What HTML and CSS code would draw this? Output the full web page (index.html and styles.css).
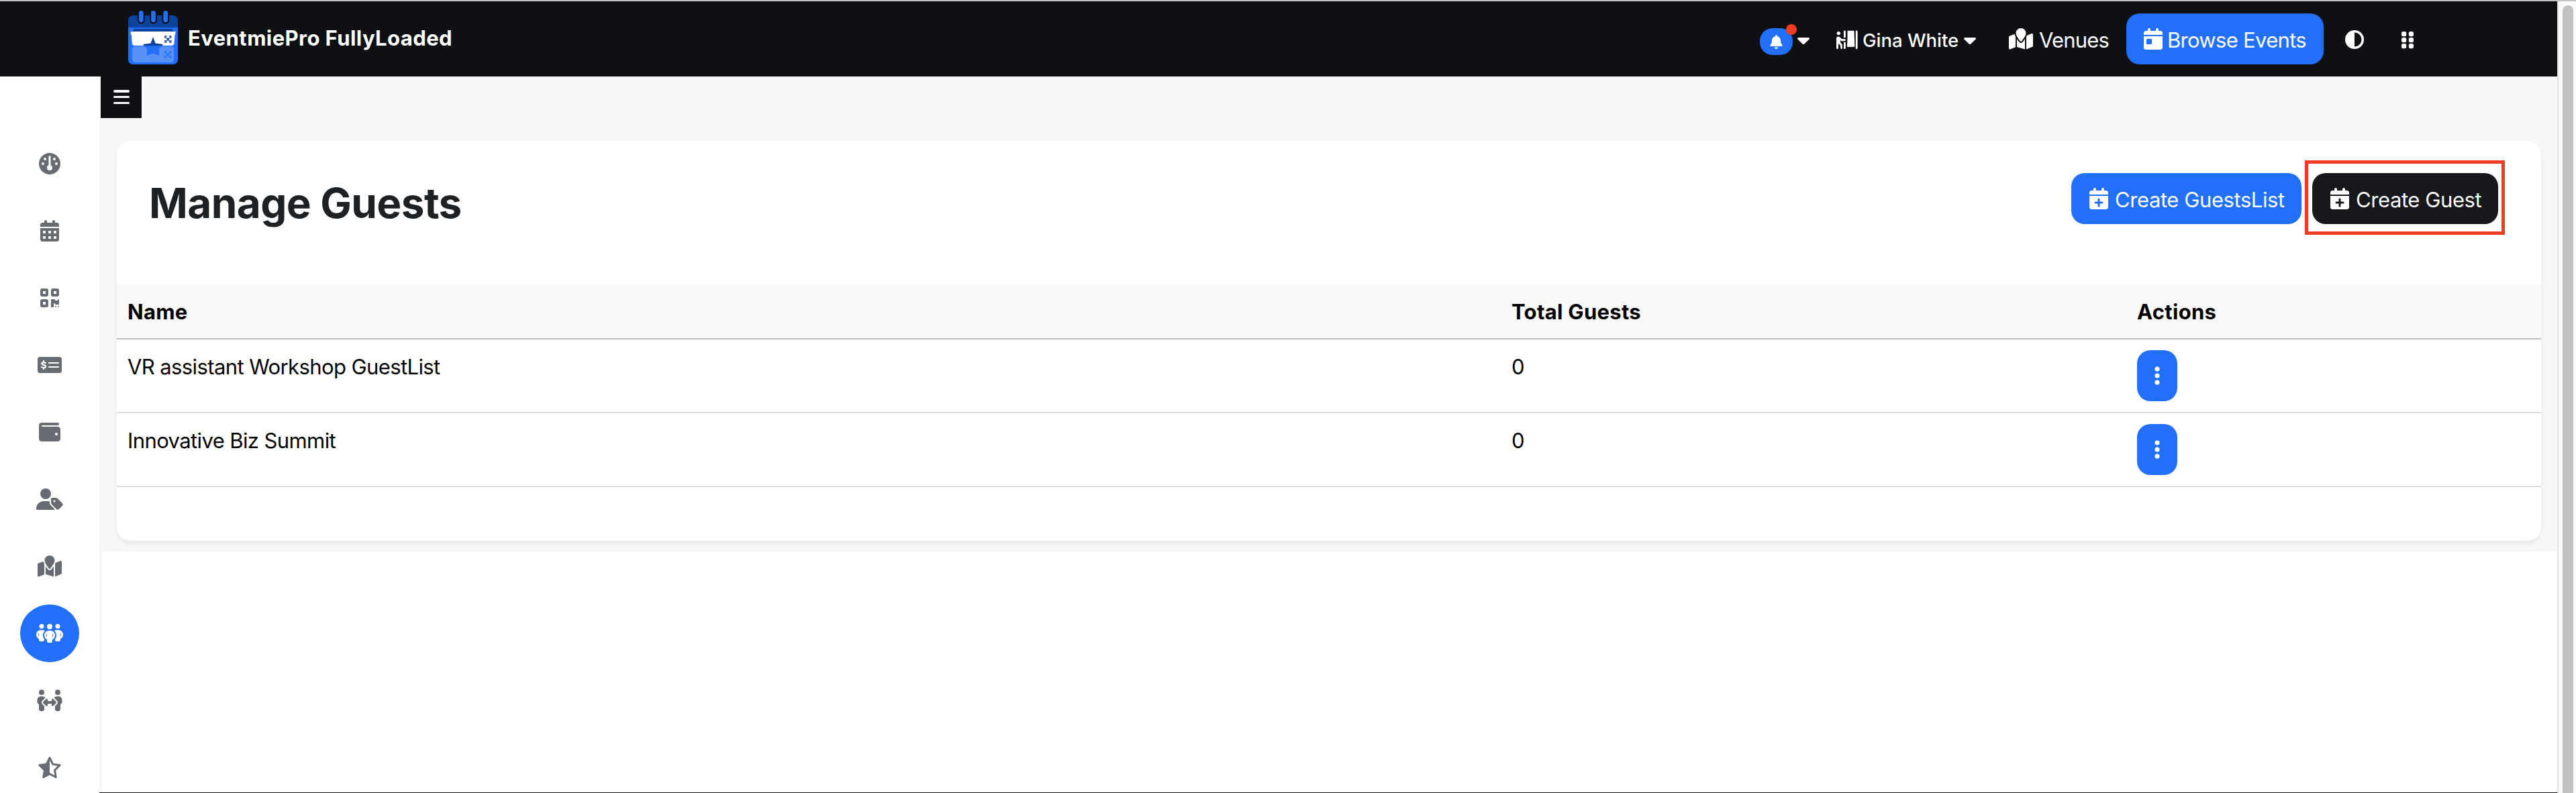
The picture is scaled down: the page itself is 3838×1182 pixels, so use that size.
FILE: index.html
```html
<!DOCTYPE html>
<html lang="en">
<head>
<meta charset="utf-8">
<title>Manage Guests</title>
<link rel="stylesheet" href="styles.css">
</head>
<body>
<svg class="sprite" aria-hidden="true">
  <symbol id="i-calendar-plus" viewBox="0 0 448 512"><path fill-rule="evenodd" d="M96 32a32 32 0 0 1 64 0V64H288V32a32 32 0 0 1 64 0V64h48c26.500 0 48 21.500 48 48v48H0V112C0 85.500 21.500 64 48 64H96zM0 192H448V464c0 26.500-21.500 48-48 48H48c-26.500 0-48-21.500-48-48zM200 272v56H144c-32 0-32 48 0 48h56v56c0 32 48 32 48 0V376h56c32 0 32-48 0-48H248V272c0-32-48-32-48 0z"/></symbol>
  <symbol id="i-map" viewBox="0 0 576 512"><path d="M408 120c0 54.600-73.100 151.900-105.200 192c-7.700 9.600-22 9.600-29.600 0C241.100 271.900 168 174.600 168 120C168 53.700 221.700 0 288 0s120 53.700 120 120zm8 80.400c3.500-6.900 6.700-13.800 9.600-20.600c.5-1.200 1-2.500 1.500-3.700l116-46.400C558.900 123.400 576 135 576 152l0 270.800c0 9.800-6 18.600-15.100 22.300L416 503l0-302.600zM137.600 138.300c2.400 14.100 7.200 28.300 12.800 41.500c2.900 6.800 6.100 13.700 9.600 20.600l0 251.400L32.900 502.700C17.100 509 0 497.400 0 480.400L0 209.600c0-9.800 6-18.600 15.100-22.300l122.600-49zM327.800 332c13.900-17.400 35.700-45.700 56.200-77l0 249.300L192 449.400 192 255c20.500 31.300 42.300 59.600 56.200 77c20.500 25.600 59.100 25.600 79.600 0z"/></symbol>
  <symbol id="i-caret" viewBox="0 0 18 10"><path d="M1.600 0H16.400C17.800 0 18.500 1.500 17.500 2.500L10.300 9.400c-.8.8-1.800.8-2.600 0L.5 2.500C-.5 1.500.2 0 1.600 0z"/></symbol>
  <symbol id="i-dots" viewBox="0 0 8 28"><circle cx="4" cy="4" r="3.600"/><circle cx="4" cy="14" r="3.600"/><circle cx="4" cy="24" r="3.600"/></symbol>
</svg>

<div class="top-line"></div>
<div class="window">
  <div class="app">
    <header class="navbar">
      <a class="brand">
        <svg class="logo" viewBox="0 0 74 80">
          <path fill="#0c439e" d="M7 7H67a7 7 0 0 1 7 7V26H0V14A7 7 0 0 1 7 7z"/>
          <path fill="#226ffa" d="M0 25H74V73a7 7 0 0 1-7 7H7a7 7 0 0 1-7-7z"/>
          <g stroke="#0f1014" stroke-width="11" stroke-linecap="round"><path d="M19.300 5V14M37.500 5V14M55.700 5V14"/></g>
          <g stroke="#226ffa" stroke-width="6.800" stroke-linecap="round"><path d="M19.300 3.400V13.800M37.500 3.400V13.800M55.700 3.400V13.800"/></g>
          <path fill="#0c439e" d="M9 27H65l3.500 5H6z"/>
          <path fill="#fff" d="M4 31H70.500Q71 33 69.500 36L68.500 49Q68 52 64 52H10Q6 52 5.800 49L5 37Q3 34 4 31z"/>
          <path fill="#5891f6" d="M11 53H63q5 0 5 5V72q0 5-5 5H11q-5 0-5-5V58q0-5 5-5z"/>
          <path fill="#0c439e" d="M37 39l3.500 9.500L52 50l-2 2.500H24L22 50l11.500-1.500z"/>
          <path fill="#226ffa" d="M24 52.500H50L46 57V67L37 63.500 28 67V57z"/>
          <path fill="none" stroke="#0c439e" stroke-width="1.600" d="M55 41V38H57.500M61 38H63.500V41M55 44V47H57.500M61 47H63.500V44M56.500 40l5.500 5.500M62 40l-5.500 5.500"/>
          <path fill="none" stroke="#226ffa" stroke-width="1.600" d="M55 64V61H57.500M61 61H63.500V64M55 67V70H57.500M61 70H63.500V67M56.500 63l5.500 5M62 63l-5.500 5"/>
        </svg>
        <span class="brand-name t">EventmiePro FullyLoaded</span>
      </a>
      <nav class="nav">
        <a class="bell">
          <svg viewBox="0 0 448 512"><path d="M224 0c-17.700 0-32 14.300-32 32l0 19.200C119 66 64 130.600 64 208l0 18.800c0 47-17.300 92.400-48.500 127.600l-7.400 8.300c-8.400 9.400-10.400 22.900-5.300 34.400S19.400 416 32 416l384 0c12.600 0 24-7.400 29.200-18.900s3.100-25-5.300-34.400l-7.400-8.300C401.300 319.200 384 273.900 384 226.800l0-18.800c0-77.400-55-142-128-156.800L256 32c0-17.700-14.300-32-32-32zm45.300 493.300c12-12 18.700-28.300 18.700-45.300l-128 0c0 17 6.700 33.300 18.700 45.300s28.300 18.700 45.300 18.700s33.300-6.700 45.300-18.700z"/></svg>
          <i class="unread"></i>
        </a>
        <svg class="caret caret-bell"><use href="#i-caret"/></svg>
        <svg class="booth" viewBox="0 0 32 28"><circle cx="3.300" cy="4.600" r="2.700"/><path d="M0 12.500Q0 9.500 2.800 9.500 5 9.500 6 11L8 13h4q2 0 2 1.600T12 16.200H7.500L6 15v3l2 2.500q.9 1 .9 2.500v3.500Q8.900 28 7.600 28T6.200 26.500V23L3 20v6.500Q3 28 1.500 28T0 26.500zM11 2Q11 .6 12.400.6T13.800 2V11H11zM11 18h2.800v8.500q0 1.500-1.400 1.500T11 26.500zM16.500.8H26.500L27.300 24Q26 25.500 25 24.500 24 26 22.500 24.500 21 26 19.500 24.500 17.500 26 15.700 24 16.800 18 16.500.8zM28.800 2q0-1.400 1.300-1.400T31.600 2V26.500q0 1.500-1.500 1.500t-1.300-1.500z"/></svg>
        <span class="user t">Gina White</span>
        <svg class="caret caret-user"><use href="#i-caret"/></svg>
        <svg class="map"><use href="#i-map"/></svg>
        <span class="venues t">Venues</span>
        <a class="btn btn-blue browse">
          <svg class="btn-icon" viewBox="0 0 448 512"><path fill-rule="evenodd" d="M96 32a32 32 0 0 1 64 0V64H288V32a32 32 0 0 1 64 0V64h48c26.500 0 48 21.500 48 48v48H0V112C0 85.500 21.500 64 48 64H96zM0 192H448V464c0 26.500-21.500 48-48 48H48c-26.500 0-48-21.500-48-48zM80 256q-16 0-16 16v96q0 16 16 16h96q16 0 16-16v-96q0-16-16-16z"/></svg>
          <span class="t">Browse Events</span>
        </a>
        <svg class="theme" viewBox="0 0 512 512"><path fill-rule="evenodd" d="M448 256c0-106-86-192-192-192V448c106 0 192-86 192-192zM0 256a256 256 0 1 1 512 0A256 256 0 1 1 0 256z"/></svg>
        <svg class="grip" viewBox="0 0 18 26"><rect width="7.200" height="7.200" rx="2.200"/><rect x="10.800" width="7.200" height="7.200" rx="2.200"/><rect y="9" width="7.200" height="7.200" rx="2.200"/><rect x="10.800" y="9" width="7.200" height="7.200" rx="2.200"/><rect y="18" width="7.200" height="7.200" rx="2.200"/><rect x="10.800" y="18" width="7.200" height="7.200" rx="2.200"/></svg>
      </nav>
    </header>
    <div class="body">
      <aside class="sidebar">
        <a class="side-item"><svg width="32" height="32" viewBox="0 0 512 512"><circle cx="256" cy="256" r="256"/><g fill="#fff"><rect x="232" y="64" width="48" height="260" rx="24"/><circle cx="256" cy="352" r="64"/><circle cx="96" cy="256" r="32"/><circle cx="144" cy="144" r="32"/><circle cx="368" cy="144" r="32"/><circle cx="416" cy="256" r="32"/></g></svg></a>
        <a class="side-item"><svg width="28" height="32" viewBox="0 0 448 512"><path fill-rule="evenodd" d="M96 32a32 32 0 0 1 64 0V64H288V32a32 32 0 0 1 64 0V64h48c26.500 0 48 21.500 48 48v48H0V112C0 85.500 21.500 64 48 64H96zM0 192H448V464c0 26.500-21.500 48-48 48H48c-26.500 0-48-21.500-48-48zM80 256q-16 0-16 16v32q0 16 16 16h32q16 0 16-16v-32q0-16-16-16zM208 256q-16 0-16 16v32q0 16 16 16h32q16 0 16-16v-32q0-16-16-16zM336 256q-16 0-16 16v32q0 16 16 16h32q16 0 16-16v-32q0-16-16-16zM80 384q-16 0-16 16v32q0 16 16 16h32q16 0 16-16v-32q0-16-16-16zM208 384q-16 0-16 16v32q0 16 16 16h32q16 0 16-16v-32q0-16-16-16zM336 384q-16 0-16 16v32q0 16 16 16h32q16 0 16-16v-32q0-16-16-16z"/></svg></a>
        <a class="side-item"><svg width="28" height="32" viewBox="0 0 448 512"><path fill-rule="evenodd" d="M48 32h96q48 0 48 48v96q0 48-48 48H48Q0 224 0 176V80Q0 32 48 32zM64 96v64h64V96zM304 32h96q48 0 48 48v96q0 48-48 48h-96q-48 0-48-48V80q0-48 48-48zM320 96v64h64V96zM48 288h96q48 0 48 48v96q0 48-48 48H48q-48 0-48-48v-96q0-48 48-48zM64 352v64h64v-64z"/><path d="M256 304c0-8.800 7.200-16 16-16l64 0c8.800 0 16 7.200 16 16s7.200 16 16 16l32 0c8.800 0 16-7.200 16-16s7.200-16 16-16s16 7.200 16 16l0 96c0 8.800-7.200 16-16 16l-64 0c-8.800 0-16-7.200-16-16s-7.200-16-16-16s-16 7.200-16 16l0 64c0 8.800-7.200 16-16 16l-32 0c-8.800 0-16-7.200-16-16l0-160zM368 480a16 16 0 1 1 0-32 16 16 0 1 1 0 32zm64 0a16 16 0 1 1 0-32 16 16 0 1 1 0 32z"/></svg></a>
        <a class="side-item"><svg width="36" height="32" viewBox="0 0 576 512"><rect y="64" width="576" height="384" rx="56"/><path fill="none" stroke="#fff" stroke-width="34" stroke-linecap="round" d="M272 208H496M272 304H496M190 208c-36-16-90-14-90 16 0 38 94 22 94 68 0 34-56 36-98 14M144 156v34M144 320v36"/></svg></a>
        <a class="side-item"><svg width="32" height="32" viewBox="0 0 512 512"><path fill-rule="evenodd" d="M64 32C28.700 32 0 60.700 0 96V416c0 35.300 28.700 64 64 64H448c35.300 0 64-28.700 64-64V192c0-35.300-28.700-64-64-64H80c-8.800 0-16-7.200-16-16s7.200-16 16-16H448c17.700 0 32-14.300 32-32s-14.300-32-32-32H64zM416 272a32 32 0 1 1 0 64 32 32 0 1 1 0-64z"/></svg></a>
        <a class="side-item"><svg width="40" height="32" viewBox="0 0 640 512"><path fill-rule="evenodd" d="M224 256A128 128 0 1 0 224 0a128 128 0 1 0 0 256zm-45.700 48C79.800 304 0 383.800 0 482.300C0 498.700 13.300 512 29.700 512l388.600 0c10 0 18.800-4.900 24.200-12.500l-99.200-99.200c-14.900-14.900-23.300-35.100-23.300-56.100l0-33c-15.900-4.700-32.800-7.200-50.300-7.200l-91.400 0zM384 224c-17.700 0-32 14.300-32 32l0 82.700c0 17 6.700 33.300 18.700 45.300L478.100 491.300c18.700 18.700 49.100 18.700 67.900 0l73.400-73.400c18.700-18.700 18.700-49.100 0-67.900L512 242.700c-12-12-28.300-18.700-45.300-18.700L384 224zm24 80a24 24 0 1 1 48 0 24 24 0 1 1 -48 0z"/></svg></a>
        <a class="side-item"><svg width="36" height="32"><use href="#i-map"/></svg></a>
        <a class="side-item active"><svg width="40" height="32" viewBox="0 0 640 512"><path fill-rule="evenodd" d="M72 88a56 56 0 1 1 112 0A56 56 0 1 1 72 88zM64 245.700C54 256.900 48 271.800 48 288s6 31.100 16 42.300l0-84.700zm144.400-49.300C178.700 222.700 160 261.200 160 304c0 34.300 12 65.800 32 90.500l0 21.500c0 17.700-14.300 32-32 32l-64 0c-17.700 0-32-14.300-32-32l0-26.800C26.200 371.200 0 332.700 0 288c0-61.900 50.100-112 112-112l32 0c24 0 46.200 7.500 64.400 20.300zM448 416l0-21.500c20-24.700 32-56.200 32-90.500c0-42.800-18.700-81.300-48.400-107.700C449.800 183.500 472 176 496 176l32 0c61.900 0 112 50.100 112 112c0 44.700-26.200 83.200-64 101.200l0 26.800c0 17.700-14.300 32-32 32l-64 0c-17.700 0-32-14.300-32-32zm8-328a56 56 0 1 1 112 0A56 56 0 1 1 456 88zM576 245.700l0 84.700c10-11.300 16-26.100 16-42.300s-6-31.100-16-42.300zM320 32a64 64 0 1 1 0 128 64 64 0 1 1 0-128zM240 304c0 16.200 6 31 16 42.300l0-84.700c-10 11.300-16 26.100-16 42.300zm144-42.300l0 84.700c10-11.300 16-26.100 16-42.300s-6-31.100-16-42.300zM448 304c0 44.700-26.200 83.200-64 101.200l0 42.800c0 17.700-14.300 32-32 32l-64 0c-17.700 0-32-14.300-32-32l0-42.800c-37.800-18-64-56.500-64-101.200c0-61.900 50.100-112 112-112l32 0c61.900 0 112 50.100 112 112z"/></svg></a>
        <a class="side-item"><svg width="40" height="32" viewBox="0 0 640 512"><path d="M64 64a64 64 0 1 1 128 0A64 64 0 1 1 64 64zM25.900 233.400C29.300 191.900 64 160 105.600 160l44.800 0c27 0 51 13.400 65.500 34.100c-2.700 1.900-5.200 4-7.500 6.300l-64 64c-21.900 21.900-21.900 57.300 0 79.200L192 391.200l0 72.800c0 26.500-21.500 48-48 48l-32 0c-26.500 0-48-21.500-48-48l0-115.300c-26.500-9.500-44.200-35.900-41.800-65.300l3.700-50zM448 64a64 64 0 1 1 128 0A64 64 0 1 1 448 64zM431.600 200.400c-2.300-2.300-4.900-4.400-7.500-6.300c14.500-20.700 38.600-34.100 65.500-34.100l44.800 0c41.600 0 76.300 31.900 79.700 73.400l3.700 50c2.400 29.400-15.300 55.800-41.800 65.300L576 464c0 26.500-21.500 48-48 48l-32 0c-26.500 0-48-21.500-48-48l0-72.800 47.600-47.600c21.900-21.900 21.900-57.300 0-79.200l-64-64zM272 240l0 32 96 0 0-32c0-9.700 5.800-18.500 14.800-22.200s19.300-1.700 26.200 5.200l64 64c9.400 9.400 9.400 24.600 0 33.900l-64 64c-6.900 6.900-17.200 8.900-26.200 5.200s-14.800-12.500-14.800-22.200l0-32-96 0 0 32c0 9.700-5.800 18.500-14.800 22.200s-19.300 1.700-26.200-5.200l-64-64c-9.400-9.400-9.400-24.600 0-33.900l64-64c6.900-6.900 17.200-8.900 26.200-5.200s14.800 12.500 14.800 22.200z"/></svg></a>
        <a class="side-item"><svg width="36" height="32" viewBox="0 0 576 512"><path fill-rule="evenodd" d="M309.500 13.500C305.500 5.200 297.100 0 287.900 0s-17.600 5.200-21.600 13.500L197.700 154.800 44.500 177.500c-9 1.300-16.500 7.600-19.300 16.300s-.5 18.100 5.900 24.500L142.200 328.400 116 483.900c-1.500 9 2.200 18.100 9.700 23.500s17.300 6 25.300 1.700l137-73.200 137 73.200c8.100 4.300 17.900 3.700 25.300-1.700s11.200-14.500 9.700-23.500L433.600 328.400 544.800 218.200c6.500-6.400 8.700-15.900 5.900-24.500s-10.300-14.900-19.300-16.300L378.100 154.800 309.500 13.500zM288 384.700V79.100l52.500 108.100c3.500 7.100 10.200 12.100 18.100 13.300l118.300 17.500L391 303c-5.500 5.500-8.100 13.300-6.800 21l20.200 119.600L299.200 387.500c-3.500-1.900-7.400-2.800-11.200-2.800z"/></svg></a>
      </aside>
      <main class="main">
        <div class="panel">
          <button class="toggle"><i></i><i></i><i></i></button>
          <section class="card">
            <div class="card-head">
              <h1 class="t">Manage Guests</h1>
              <div class="actions">
                <a class="btn btn-blue create-list"><svg class="btn-icon"><use href="#i-calendar-plus"/></svg><span class="t">Create GuestsList</span></a>
                <div class="highlight"><a class="btn btn-dark create-guest"><svg class="btn-icon"><use href="#i-calendar-plus"/></svg><span class="t">Create Guest</span></a></div>
              </div>
            </div>
            <div class="row thead"><span><b class="t">Name</b></span><span><b class="t">Total Guests</b></span><span><b class="t">Actions</b></span></div>
            <div class="row"><span class="cell"><em class="t">VR assistant Workshop GuestList</em></span><span class="cell"><em class="t">0</em></span><span><a class="more"><svg><use href="#i-dots"/></svg></a></span></div>
            <div class="row"><span class="cell"><em class="t">Innovative Biz Summit</em></span><span class="cell"><em class="t">0</em></span><span><a class="more"><svg><use href="#i-dots"/></svg></a></span></div>
          </section>
        </div>
        <div class="bottom-line"></div>
      </main>
    </div>
  </div>
  <div class="scrollbar"><div class="thumb"></div></div>
</div>
</body>
</html>
```
FILE: styles.css
```css
* { box-sizing: border-box; }
body { margin: 0; height: 1182px; overflow: hidden; background: #fff; color: #000; font-family: Inter, "Liberation Sans", sans-serif; font-size: 31px; line-height: 48px; }
svg { display: block; fill: currentColor; flex: none; }
.sprite { position: absolute; width: 0; height: 0; }
.t { white-space: nowrap; }
em { font-style: normal; letter-spacing: -.6px; }
.top-line { height: 2px; background: #c3c5c5; }
.window { display: flex; height: 1180px; }
.app { width: 3810px; display: flex; flex-direction: column; }
.scrollbar { width: 28px; overflow: hidden; border-left: 2px solid #e2e3e6; background: #fafafa; padding: 6px 4px 0 6px; }
.thumb { height: 1200px; width: 16px; border-radius: 8px; background: #c1c1c1; }

.navbar { height: 112px; background: #0f1014; color: #fff; display: flex; justify-content: space-between; padding: 0 214px 0 191px; }
.brand { display: flex; align-items: flex-start; padding-top: 14px; }
.logo { width: 74px; height: 80px; }
.brand-name { font-weight: 700; margin: 17px 0 0 15px; letter-spacing: .43px; }
.nav { display: flex; align-items: center; }
.bell { position: relative; width: 49px; height: 40px; border-radius: 19px; background: #226ffa; display: flex; align-items: center; justify-content: center; margin-top: 8px; }
.bell svg { width: 19px; height: 21px; }
.unread { position: absolute; left: 39px; top: -6px; width: 16px; height: 16px; border-radius: 50%; background: #f03c22; }
.caret { width: 18px; height: 10px; margin-top: 6px; }
.caret-bell { margin-left: 7px; }
.booth { width: 32px; height: 28px; margin: 2px 7px 0 40px; }
.user { font-size: 27.500px; font-weight: 500; width: 143px; margin-top: 4px; }
.caret-user { margin-left: 8px; }
.map { width: 36px; height: 32px; margin: 0 8px 0 49px; }
.venues { width: 103px; margin: 3px 27px 0 1px; letter-spacing: -.8px; }
.btn { display: flex; align-items: center; height: 76px; border-radius: 20px; color: #fff; padding: 0 26px; letter-spacing: -.42px; }
.btn .t { margin-top: 3px; }
.btn-blue { background: #226ffa; }
.btn-dark { background: #17181c; }
.btn-icon { width: 28px; height: 32px; margin-right: 10px; }
.browse { width: 294px; letter-spacing: -.7px; }
.browse .btn-icon { margin-right: 7px; }
.theme { width: 28px; height: 28px; margin: 2px 56px 0 32px; }
.grip { width: 18px; height: 26px; margin-top: 3px; }

.body { display: flex; height: 1068px; }
.sidebar { width: 148px; padding-top: 80px; display: flex; flex-direction: column; align-items: center; color: #676c73; }
.side-item { height: 100px; flex: none; display: flex; align-items: center; justify-content: center; }
.active { width: 88px; height: 86px; margin: 7px 0; border-radius: 50%; background: #226ffa; color: #fff; }
.main { flex: 1; border-left: 4px solid #f7f8fa; display: flex; flex-direction: column; justify-content: space-between; }
.panel { position: relative; height: 708px; background: #f7f8fa; padding: 96px 24px 0 22px; }
.toggle { position: absolute; left: -2px; top: 0; width: 61px; height: 62px; border: 0; background: #0f1014; padding: 20px 18.500px 0; display: flex; flex-direction: column; gap: 5.200px; }
.toggle i { height: 3.600px; border-radius: 2px; background: #fff; }
.card { height: 596px; background: #fff; border-radius: 20px; box-shadow: 0 4px 8px rgba(0, 0, 0, .075); }
.card-head { height: 214px; display: flex; justify-content: space-between; align-items: flex-start; padding: 29px 54px 0 48px; }
h1 { margin: 28px 0 0; font-size: 62px; line-height: 72px; font-weight: 700; letter-spacing: -.55px; color: #1d2124; }
.actions { display: flex; gap: 5px; }
.create-list { width: 343px; margin-top: 19px; padding-left: 27px; }
.highlight { width: 298px; height: 111px; border: 5px solid #f03c22; padding: 14px 5px 0 6px; }
.create-guest { width: 277px; padding-left: 27px; }
.row { display: grid; grid-template-columns: 2062px 932px 1fr; height: 110px; border-bottom: 2px solid #d9dde2; }
.row > span { padding: 16px; }
.row > .cell { padding-top: 17px; }
.thead { height: 82px; background: #f9f9f9; border-bottom-color: #bdbdbd; }
.row.thead > span { padding-top: 17px; }
.thead b { font-weight: 700; letter-spacing: .3px; }
.more { width: 60px; height: 76px; border-radius: 20px; background: #226ffa; color: #fff; display: flex; align-items: center; justify-content: center; }
.more svg { width: 8px; height: 28px; }
.bottom-line { height: 1px; background: #111; margin-left: -4px; }
```
